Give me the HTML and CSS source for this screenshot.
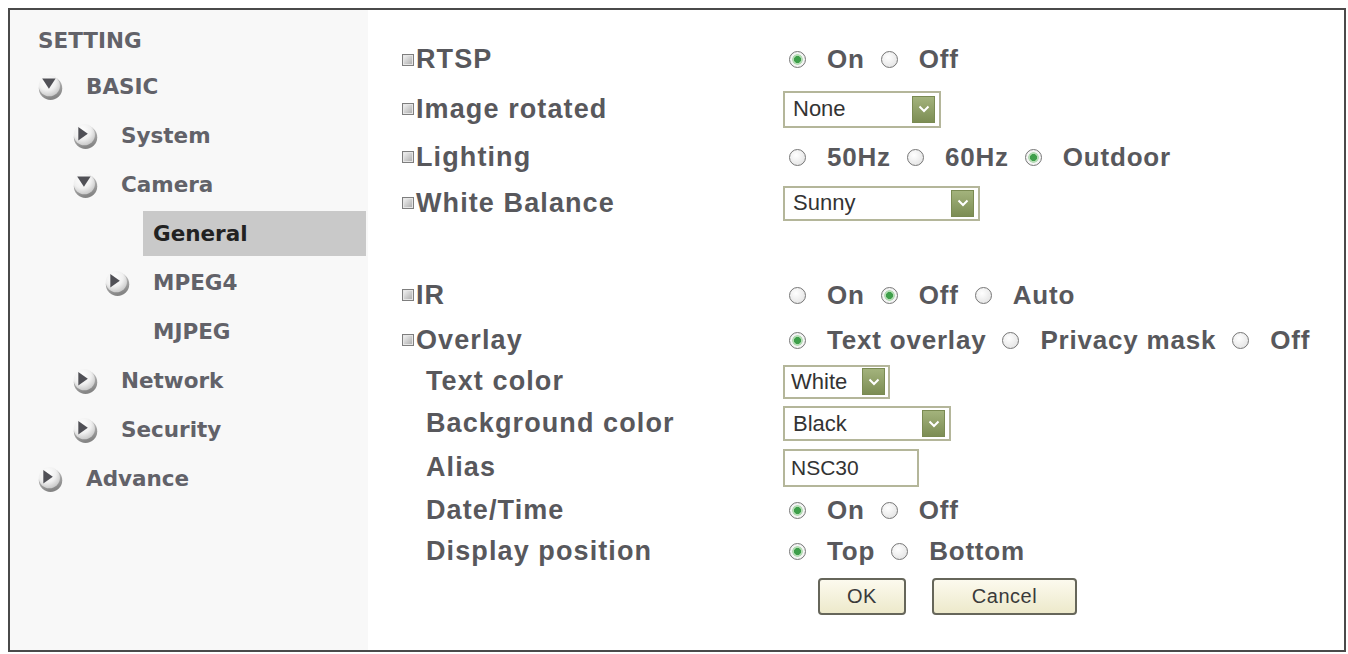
FILE: index.html
```html
<!DOCTYPE html>
<html lang="en">
<head>
<meta charset="utf-8">
<title>Setting - Camera General</title>
<link rel="stylesheet" href="styles.css">
</head>
<body>
<svg class="defs" width="0" height="0" aria-hidden="true">
  <defs>
    <radialGradient id="ballShade" cx="40%" cy="30%" r="75%">
      <stop offset="0" stop-color="#ffffff"/>
      <stop offset="0.55" stop-color="#f0f0f0"/>
      <stop offset="1" stop-color="#c4c4c4"/>
    </radialGradient>
    <linearGradient id="ballShadow" x1="0" y1="0" x2="0.3" y2="1">
      <stop offset="0" stop-color="#d4d4d4"/>
      <stop offset="1" stop-color="#858585"/>
    </linearGradient>
    <symbol id="tri-down" viewBox="0 0 24 24">
      <circle cx="12.5" cy="13.2" r="10.8" fill="url(#ballShadow)"/>
      <circle cx="11.4" cy="10.8" r="9.8" fill="url(#ballShade)"/>
      <path d="M4.8 4.2 H17.2 L11 13.6 Z" fill="#505056"/>
    </symbol>
    <symbol id="tri-right" viewBox="0 0 24 24">
      <circle cx="12.5" cy="13.2" r="10.8" fill="url(#ballShadow)"/>
      <circle cx="11.4" cy="10.8" r="9.8" fill="url(#ballShade)"/>
      <path d="M5.8 3.8 V16.2 L14.6 10 Z" fill="#505056"/>
    </symbol>
    <symbol id="chev" viewBox="0 0 12 8">
      <polyline points="1.5,1.5 6,6 10.5,1.5" fill="none" stroke="#ffffff" stroke-width="2"/>
    </symbol>
  </defs>
</svg>

<div class="frame">
  <nav class="sidebar">
    <div class="title">SETTING</div>
    <ul class="tree">
      <li class="item l0"><svg class="arrow"><use href="#tri-down"/></svg><span>BASIC</span></li>
      <li class="item l1"><svg class="arrow"><use href="#tri-right"/></svg><span>System</span></li>
      <li class="item l1"><svg class="arrow"><use href="#tri-down"/></svg><span>Camera</span></li>
      <li class="item active"><span>General</span></li>
      <li class="item l2"><svg class="arrow"><use href="#tri-right"/></svg><span>MPEG4</span></li>
      <li class="item leaf"><span>MJPEG</span></li>
      <li class="item l1"><svg class="arrow"><use href="#tri-right"/></svg><span>Network</span></li>
      <li class="item l1"><svg class="arrow"><use href="#tri-right"/></svg><span>Security</span></li>
      <li class="item l0"><svg class="arrow"><use href="#tri-right"/></svg><span>Advance</span></li>
    </ul>
  </nav>

  <main class="content">
    <div class="form">
      <div class="label"><span class="bullet"></span>RTSP</div>
      <div class="value">
        <span class="opt"><span class="radio on"></span>On</span>
        <span class="opt"><span class="radio"></span>Off</span>
      </div>

      <div class="label"><span class="bullet"></span>Image rotated</div>
      <div class="value">
        <div class="select w-none"><span>None</span><span class="drop"><svg class="chev"><use href="#chev"/></svg></span></div>
      </div>

      <div class="label"><span class="bullet"></span>Lighting</div>
      <div class="value">
        <span class="opt"><span class="radio"></span>50Hz</span>
        <span class="opt"><span class="radio"></span>60Hz</span>
        <span class="opt"><span class="radio on"></span>Outdoor</span>
      </div>

      <div class="label"><span class="bullet"></span>White Balance</div>
      <div class="value">
        <div class="select w-sunny"><span>Sunny</span><span class="drop"><svg class="chev"><use href="#chev"/></svg></span></div>
      </div>

      <div class="spacer"></div>

      <div class="label"><span class="bullet"></span>IR</div>
      <div class="value">
        <span class="opt"><span class="radio"></span>On</span>
        <span class="opt"><span class="radio on"></span>Off</span>
        <span class="opt"><span class="radio"></span>Auto</span>
      </div>

      <div class="label"><span class="bullet"></span>Overlay</div>
      <div class="value">
        <span class="opt"><span class="radio on"></span>Text overlay</span>
        <span class="opt"><span class="radio"></span>Privacy mask</span>
        <span class="opt"><span class="radio"></span>Off</span>
      </div>

      <div class="label sub">Text color</div>
      <div class="value">
        <div class="select w-white"><span>White</span><span class="drop"><svg class="chev"><use href="#chev"/></svg></span></div>
      </div>

      <div class="label sub">Background color</div>
      <div class="value">
        <div class="select w-black"><span>Black</span><span class="drop"><svg class="chev"><use href="#chev"/></svg></span></div>
      </div>

      <div class="label sub">Alias</div>
      <div class="value">
        <div class="textbox">NSC30</div>
      </div>

      <div class="label sub">Date/Time</div>
      <div class="value">
        <span class="opt"><span class="radio on"></span>On</span>
        <span class="opt"><span class="radio"></span>Off</span>
      </div>

      <div class="label sub">Display position</div>
      <div class="value">
        <span class="opt"><span class="radio on"></span>Top</span>
        <span class="opt"><span class="radio"></span>Bottom</span>
      </div>

      <div></div>
      <div class="value actions">
        <button class="btn btn-ok" type="button">OK</button>
        <button class="btn btn-cancel" type="button">Cancel</button>
      </div>
    </div>
  </main>
</div>
</body>
</html>
```

FILE: styles.css
```css
* { box-sizing: border-box; }

html, body {
  margin: 0;
  background: #ffffff;
}

body {
  font-family: "Liberation Sans", Arial, sans-serif;
}

.defs {
  position: absolute;
  width: 0;
  height: 0;
  overflow: hidden;
}

.frame {
  margin: 8px 2px 0 8px;
  height: 644px;
  border: 2px solid #4a4a4a;
  display: flex;
  background: #ffffff;
}

/* ---------- sidebar ---------- */
.sidebar {
  width: 358px;
  flex: none;
  background: #f8f8f8;
  font-family: "DejaVu Sans", Verdana, sans-serif;
  font-weight: bold;
  font-size: 21.5px;
  color: #626269;
}

.title {
  margin: 8px 0 1px 28px;
  line-height: 45px;
}

.tree {
  list-style: none;
  margin: 0;
  padding: 0;
  display: flex;
  flex-direction: column;
  gap: 4px;
}

.item {
  display: flex;
  align-items: center;
  height: 45px;
}

.l0 { padding-left: 27px; }
.l1 { padding-left: 62px; }
.l2 { padding-left: 94px; }
.leaf { padding-left: 143px; }

.active {
  margin-left: 133px;
  margin-right: 2px;
  padding-left: 10px;
  background: #c9c9c9;
  color: #222222;
}

.arrow {
  width: 26px;
  height: 26px;
  margin-right: 23px;
  flex: none;
}

/* ---------- content ---------- */
.content {
  flex: 1;
  padding: 25px 0 0 34px;
}

.form {
  display: grid;
  grid-template-columns: 381px auto;
  grid-template-rows: 49px 50px 46px 46px 46px 46px 44px 39px 45px 43px 43px 39px 50px;
  align-items: center;
}

.spacer { grid-column: 1 / -1; }

.label {
  display: flex;
  align-items: center;
  font-weight: bold;
  font-size: 27px;
  letter-spacing: 1.1px;
  color: #58585c;
  white-space: nowrap;
}

.label.sub { padding-left: 24px; }

.bullet {
  width: 12px;
  height: 12px;
  margin-right: 2px;
  flex: none;
  border: 1px solid #7e7e7e;
  background: linear-gradient(135deg, #f6f6f6, #a8a8a8);
  box-shadow: inset 0 0 0 1px #e6e6e6;
}

.value {
  display: flex;
  align-items: center;
  font-weight: bold;
  font-size: 26px;
  letter-spacing: 0.8px;
  color: #58585c;
  white-space: nowrap;
}

.opt {
  display: flex;
  align-items: center;
}

.opt:first-child { margin-left: 6px; }
.opt + .opt { margin-left: 16px; }

.radio {
  width: 17px;
  height: 17px;
  margin-right: 21px;
  flex: none;
  border-radius: 50%;
  border: 1px solid #767676;
  background: radial-gradient(circle at 40% 35%, #ffffff, #dedede);
}

.radio.on {
  background: radial-gradient(circle, #3e9f4a 0 3.2px, #b5dcb5 3.8px 5px, #f4f4f4 5.6px);
}

.select {
  display: flex;
  align-items: center;
  justify-content: space-between;
  height: 36px;
  padding: 0 4px 0 8px;
  border: 2px solid #b4b69a;
  background: #ffffff;
  font-weight: normal;
  font-size: 22px;
  letter-spacing: 0;
  color: #333333;
}

.w-none { width: 158px; height: 37px; }
.w-sunny { width: 197px; height: 35px; }
.w-white { width: 107px; height: 34px; padding-left: 6px; padding-right: 3px; }
.w-black { width: 168px; height: 35px; }

.drop {
  width: 23px;
  height: 27px;
  display: flex;
  align-items: center;
  justify-content: center;
  background: linear-gradient(#a3b37c, #7c8d54);
  border: 1px solid #7a8a52;
}

.chev {
  width: 12px;
  height: 8px;
}

.textbox {
  width: 136px;
  height: 38px;
  padding-left: 6px;
  display: flex;
  align-items: center;
  border: 2px solid #b4b69a;
  background: #ffffff;
  font-weight: normal;
  font-size: 21px;
  letter-spacing: 0;
  color: #333333;
}

.actions {
  padding-left: 35px;
  gap: 26px;
}

.btn {
  height: 37px;
  border: 2px solid #66665a;
  border-radius: 4px;
  background: linear-gradient(#fcfaee, #ede9cb);
  font-family: "Liberation Sans", Arial, sans-serif;
  font-size: 20px;
  letter-spacing: 0.5px;
  color: #3a3a3a;
  padding: 0;
}

.btn-ok { width: 88px; }
.btn-cancel { width: 145px; }
```
